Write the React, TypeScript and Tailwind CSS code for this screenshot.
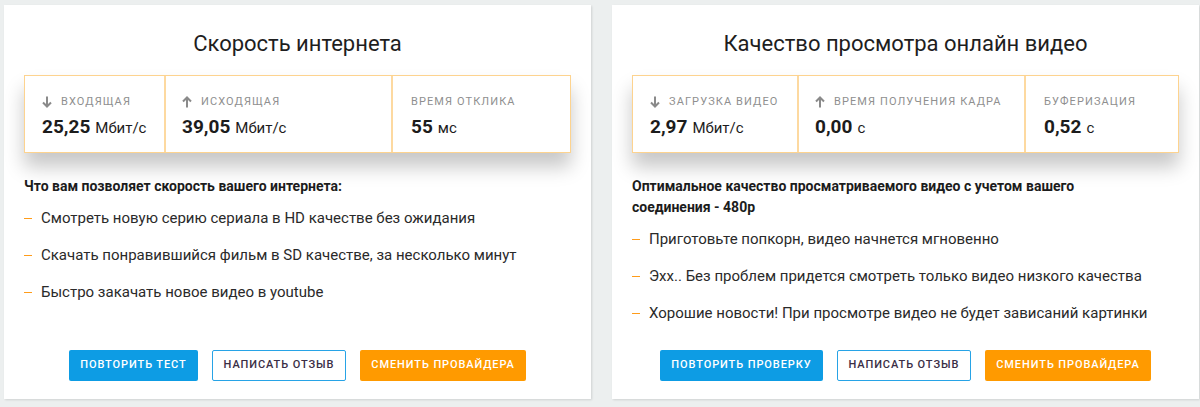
import React from "react";

const font = { fontFamily: "Roboto, 'Noto Sans', sans-serif" };

function ArrowDown() {
  return (
    <svg width="10" height="12" viewBox="0 0 10 12" className="mr-[9px]">
      <path d="M5 0.5V10.5M1 6.5L5 10.5L9 6.5" stroke="#8a8a8a" strokeWidth="2" fill="none" />
    </svg>
  );
}
function ArrowUp() {
  return (
    <svg width="10" height="12" viewBox="0 0 10 12" className="mr-[9px]">
      <path d="M5 11.5V1.5M1 5.5L5 1.5L9 5.5" stroke="#8a8a8a" strokeWidth="2" fill="none" />
    </svg>
  );
}

type Stat = { icon?: "down" | "up"; label: string; value: string; unit: string; w: string; pl: string };

function Stats({ stats }: { stats: Stat[] }) {
  return (
    <div className="flex h-[78px] border border-[#fdd38f] bg-white shadow-[0_14px_18px_rgba(0,0,0,0.22)]">
      {stats.map((s, i) => (
        <div
          key={i}
          className={`${s.w} ${s.pl} pt-[20px] ${i > 0 ? "border-l-2 border-[#fdd9a0]" : ""}`}
        >
          <div className="flex items-center h-[12px] text-[11px] tracking-[1.1px] text-[#8f8f8f] uppercase">
            {s.icon === "down" && <ArrowDown />}
            {s.icon === "up" && <ArrowUp />}
            <span>{s.label}</span>
          </div>
          <div className="mt-[5px] flex items-baseline text-[#1c1c1c]">
            <span className="text-[19px] font-bold">{s.value}</span>
            <span className="ml-[5px] text-[15px]">{s.unit}</span>
          </div>
        </div>
      ))}
    </div>
  );
}

function Dash() {
  return <span className="block w-[8px] h-[1px] bg-[#ff9c1a] mr-[9px] mt-[10px] shrink-0 self-start" />;
}

function Card({
  title,
  stats,
  heading,
  items,
  buttons,
  listGap,
}: {
  title: string;
  stats: Stat[];
  heading: React.ReactNode;
  items: string[];
  buttons: string[];
  listGap: string;
}) {
  return (
    <div className="w-[587px] h-[394px] bg-white shadow-[1px_1px_2px_rgba(0,0,0,0.12)] px-[20px] flex flex-col">
      <h2 className="text-center text-[22px] text-[#1e1e1e] mt-[24px] leading-[30px]">{title}</h2>
      <div className="mt-[16px]">
        <Stats stats={stats} />
      </div>
      <div className="mt-[23px] text-[14px] font-bold text-[#1c1c1c] leading-[21px]">{heading}</div>
      <ul className={`mt-[11px] flex flex-col ${listGap}`}>
        {items.map((t) => (
          <li key={t} className="flex text-[15px] text-[#2a2a2a] leading-[20px]">
            <Dash />
            {t}
          </li>
        ))}
      </ul>
      <div className="mt-auto mb-[18px] flex justify-center gap-[14px]">
        <button className="h-[31px] px-[11px] rounded-[2px] bg-[#0d9ce4] text-white text-[11px] font-medium tracking-[0.9px] uppercase">
          {buttons[0]}
        </button>
        <button className="h-[31px] px-[11px] rounded-[2px] border border-[#27a3e6] bg-white text-[#3a2e45] text-[11px] font-medium tracking-[0.9px] uppercase">
          НАПИСАТЬ ОТЗЫВ
        </button>
        <button className="h-[31px] px-[11px] rounded-[2px] bg-[#ff9a00] text-white text-[11px] font-medium tracking-[0.9px] uppercase">
          СМЕНИТЬ ПРОВАЙДЕРА
        </button>
      </div>
    </div>
  );
}

export default function App() {
  return (
    <div style={font} className="w-[1200px] h-[407px] bg-[#ecefef] pl-[4px] pt-[5px] flex gap-[21px] overflow-hidden">
      <Card
        title="Скорость интернета"
        stats={[
          { icon: "down", label: "Входящая", value: "25,25", unit: "Мбит/с", w: "w-[139px]", pl: "pl-[17px]" },
          { icon: "up", label: "Исходящая", value: "39,05", unit: "Мбит/с", w: "w-[227px]", pl: "pl-[16px]" },
          { label: "Время отклика", value: "55", unit: "мс", w: "flex-1", pl: "pl-[18px]" },
        ]}
        heading="Что вам позволяет скорость вашего интернета:"
        items={[
          "Смотреть новую серию сериала в HD качестве без ожидания",
          "Скачать понравившийся фильм в SD качестве, за несколько минут",
          "Быстро закачать новое видео в youtube",
        ]}
        listGap="gap-[17px]"
        buttons={["Повторить тест"]}
      />
      <Card
        title="Качество просмотра онлайн видео"
        stats={[
          { icon: "down", label: "Загрузка видео", value: "2,97", unit: "Мбит/с", w: "w-[164px]", pl: "pl-[17px]" },
          { icon: "up", label: "Время получения кадра", value: "0,00", unit: "с", w: "w-[227px]", pl: "pl-[16px]" },
          { label: "Буферизация", value: "0,52", unit: "с", w: "flex-1", pl: "pl-[18px]" },
        ]}
        heading={
          <>
            Оптимальное качество просматриваемого видео с учетом вашего
            <br />
            соединения - 480p
          </>
        }
        items={[
          "Приготовьте попкорн, видео начнется мгновенно",
          "Эхх.. Без проблем придется смотреть только видео низкого качества",
          "Хорошие новости! При просмотре видео не будет зависаний картинки",
        ]}
        listGap="gap-[17px]"
        buttons={["Повторить проверку"]}
      />
    </div>
  );
}
